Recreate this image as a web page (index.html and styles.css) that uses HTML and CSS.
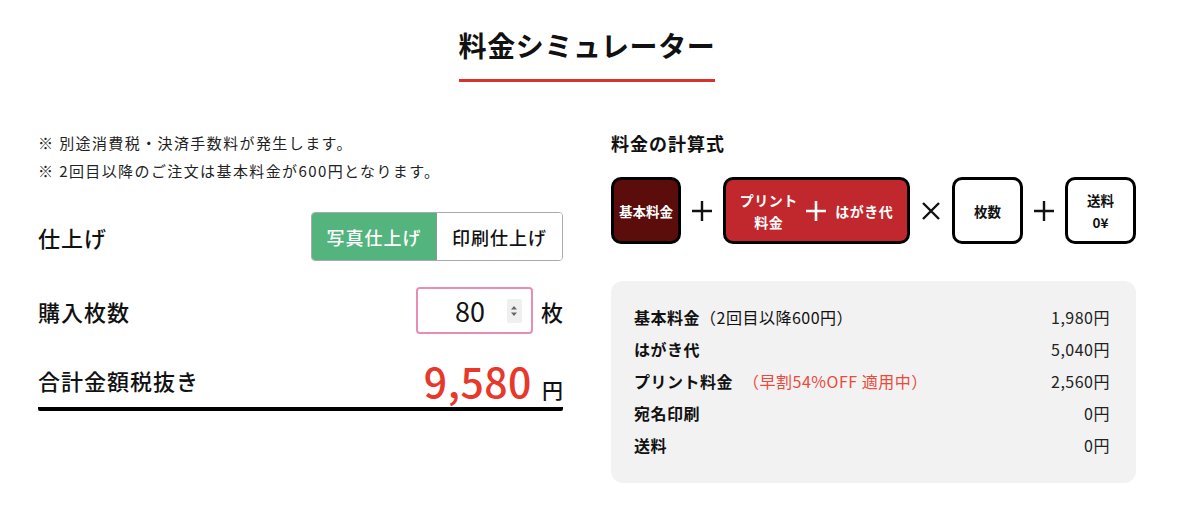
FILE: index.html
```html
<!DOCTYPE html>
<html lang="ja">
<head>
  <meta charset="UTF-8" />
  <title>料金シミュレーター</title>
  <meta name="viewport" content="width=device-width, initial-scale=1.0" />
  <link rel="stylesheet" href="styles.css">
</head>
<body>
  <section class="simulator">
    <div class="sim-head">
      <h1 class="sim-title">料金シミュレーター</h1>
    </div>

    <div class="sim-body">
      <div class="sim-form">
        <p class="note">※ 別途消費税・決済手数料が発生します。<br>※ 2回目以降のご注文は基本料金が600円となります。</p>

        <div class="form-row finish-row">
          <span class="row-label">仕上げ</span>
          <div class="toggle">
            <button class="toggle-btn active">写真仕上げ</button>
            <button class="toggle-btn">印刷仕上げ</button>
          </div>
        </div>

        <div class="form-row qty-row">
          <span class="row-label">購入枚数</span>
          <div class="qty">
            <div class="qty-box">
              <input class="qty-input" type="number" value="80">
              <span class="spinner">
                <svg width="8" height="14" viewBox="0 0 8 14"><path d="M4 2 L7 5.5 H1 Z M4 12 L7 8.5 H1 Z" fill="#666"/></svg>
              </span>
            </div>
            <span class="unit">枚</span>
          </div>
        </div>

        <div class="form-row total-row">
          <span class="row-label">合計金額税抜き</span>
          <div class="total">
            <span class="total-price">9,580</span>
            <span class="total-yen">円</span>
          </div>
        </div>
      </div>

      <div class="sim-result">
        <h2 class="formula-title">料金の計算式</h2>

        <div class="formula">
          <div class="term term-base">基本料金</div>
          <span class="op">
            <svg width="22" height="22" viewBox="0 0 22 22"><path d="M11 1 V21 M1 11 H21" stroke="#111" stroke-width="2.4"/></svg>
          </span>
          <div class="term term-unit">
            <span class="term-text">プリント<br>料金</span>
            <svg width="22" height="22" viewBox="0 0 22 22"><path d="M11 1 V21 M1 11 H21" stroke="#fff" stroke-width="2.6"/></svg>
            <span class="term-text">はがき代</span>
          </div>
          <span class="op">
            <svg width="20" height="20" viewBox="0 0 20 20"><path d="M2 2 L18 18 M18 2 L2 18" stroke="#111" stroke-width="2.4"/></svg>
          </span>
          <div class="term term-plain">枚数</div>
          <span class="op">
            <svg width="22" height="22" viewBox="0 0 22 22"><path d="M11 1 V21 M1 11 H21" stroke="#111" stroke-width="2.4"/></svg>
          </span>
          <div class="term term-plain">送料<br>0¥</div>
        </div>

        <div class="breakdown">
          <div class="line-item">
            <span class="item-name">基本料金<span class="item-sub">（2回目以降600円）</span></span>
            <span class="item-price">1,980円</span>
          </div>
          <div class="line-item">
            <span class="item-name">はがき代</span>
            <span class="item-price">5,040円</span>
          </div>
          <div class="line-item">
            <span class="item-name">プリント料金<span class="item-sale">（早割54%OFF 適用中）</span></span>
            <span class="item-price">2,560円</span>
          </div>
          <div class="line-item">
            <span class="item-name">宛名印刷</span>
            <span class="item-price">0円</span>
          </div>
          <div class="line-item">
            <span class="item-name">送料</span>
            <span class="item-price">0円</span>
          </div>
        </div>
      </div>
    </div>
  </section>
</body>
</html>
```

FILE: styles.css
```css
html, body {
  margin: 0;
  padding: 0;
  background: #fff;
  color: #111;
  font-family: "Noto Sans CJK JP", "Noto Sans", sans-serif;
}

.simulator {
  width: 1098px;
  margin-left: 38px;
}

.sim-head {
  display: flex;
  justify-content: center;
  padding-top: 24px;
}

.sim-title {
  margin: 0;
  font-size: 28px;
  font-weight: 700;
  letter-spacing: 0.6px;
  line-height: 42px;
  padding-bottom: 13px;
  border-bottom: 3px solid #d7322d;
}

.sim-body {
  display: grid;
  grid-template-columns: 525px 525px;
  column-gap: 48px;
  margin-top: 47px;
}

/* left: form */
.note {
  margin: 0;
  font-size: 15px;
  letter-spacing: 1.4px;
  line-height: 28px;
  color: #222;
}

.form-row {
  display: flex;
  justify-content: space-between;
  align-items: center;
}

.finish-row {
  margin-top: 27px;
}

.qty-row {
  margin-top: 26px;
}

.row-label {
  font-size: 22px;
  font-weight: 500;
  letter-spacing: 1px;
}

.toggle {
  display: flex;
  border: 1px solid #aaa;
  border-radius: 4px;
  overflow: hidden;
}

.toggle-btn {
  width: 125px;
  height: 47px;
  border: none;
  background: #fff;
  font-family: inherit;
  font-size: 18px;
  font-weight: 500;
  letter-spacing: 1px;
  color: #111;
  padding: 0;
}

.toggle-btn.active {
  background: #54b47e;
  color: #fff;
  border-right: 1px solid #8a9a90;
}

.qty {
  display: flex;
  align-items: center;
  gap: 8px;
}

.qty-box {
  display: flex;
  align-items: center;
  width: 113px;
  height: 43px;
  border: 2px solid #e98db4;
  border-radius: 4px;
}

.qty-input {
  width: 67px;
  border: none;
  outline: none;
  font-family: inherit;
  font-size: 27px;
  text-align: right;
  padding: 0;
  color: #111;
  -moz-appearance: textfield;
}

.qty-input::-webkit-inner-spin-button,
.qty-input::-webkit-outer-spin-button {
  -webkit-appearance: none;
  margin: 0;
}

.spinner {
  display: flex;
  align-items: center;
  justify-content: center;
  width: 15px;
  height: 24px;
  margin-left: 22px;
  background: #efefef;
  border-radius: 2px;
}

.unit {
  font-size: 22px;
  font-weight: 500;
}

.total-row {
  height: 48px;
  margin-top: 22px;
  padding-bottom: 3px;
  border-bottom: 4px solid #000;
  border-radius: 2px;
}

.total {
  display: flex;
  align-items: baseline;
  gap: 10px;
}

.total-price {
  font-size: 41px;
  font-weight: 500;
  letter-spacing: 0.5px;
  color: #e8372b;
  line-height: 48px;
}

.total-yen {
  font-size: 21px;
  font-weight: 500;
}

/* right: formula and breakdown */
.formula-title {
  margin: 0;
  font-size: 18px;
  font-weight: 700;
  letter-spacing: 1px;
  line-height: 28px;
}

.formula {
  display: flex;
  align-items: center;
  margin-top: 20px;
  height: 67px;
}

.term {
  box-sizing: border-box;
  height: 67px;
  border: 3px solid #000;
  border-radius: 10px;
  display: flex;
  align-items: center;
  justify-content: center;
  text-align: center;
  font-size: 13.5px;
  font-weight: 700;
  line-height: 22px;
}

.term-base {
  width: 70px;
  background: #5a0d0a;
  color: #fff;
}

.term-unit {
  width: 187px;
  background: #c0282d;
  color: #fff;
  justify-content: space-around;
  padding: 0 10px;
  font-size: 14px;
  letter-spacing: 0.5px;
}

.term-plain {
  width: 71px;
  background: #fff;
  color: #111;
}

.op {
  flex: 1;
  display: flex;
  justify-content: center;
  align-items: center;
}

.breakdown {
  margin-top: 37px;
  background: #f2f2f2;
  border-radius: 12px;
  padding: 20px 26px 22px 23px;
}

.line-item {
  display: flex;
  justify-content: space-between;
  align-items: center;
  height: 32px;
  font-size: 16px;
  letter-spacing: 0.5px;
}

.item-name {
  font-weight: 700;
  color: #111;
}

.item-sub {
  font-weight: 400;
}

.item-sale {
  font-weight: 400;
  color: #ea4a3d;
  margin-left: 10px;
}

.item-price {
  color: #222;
}
```
